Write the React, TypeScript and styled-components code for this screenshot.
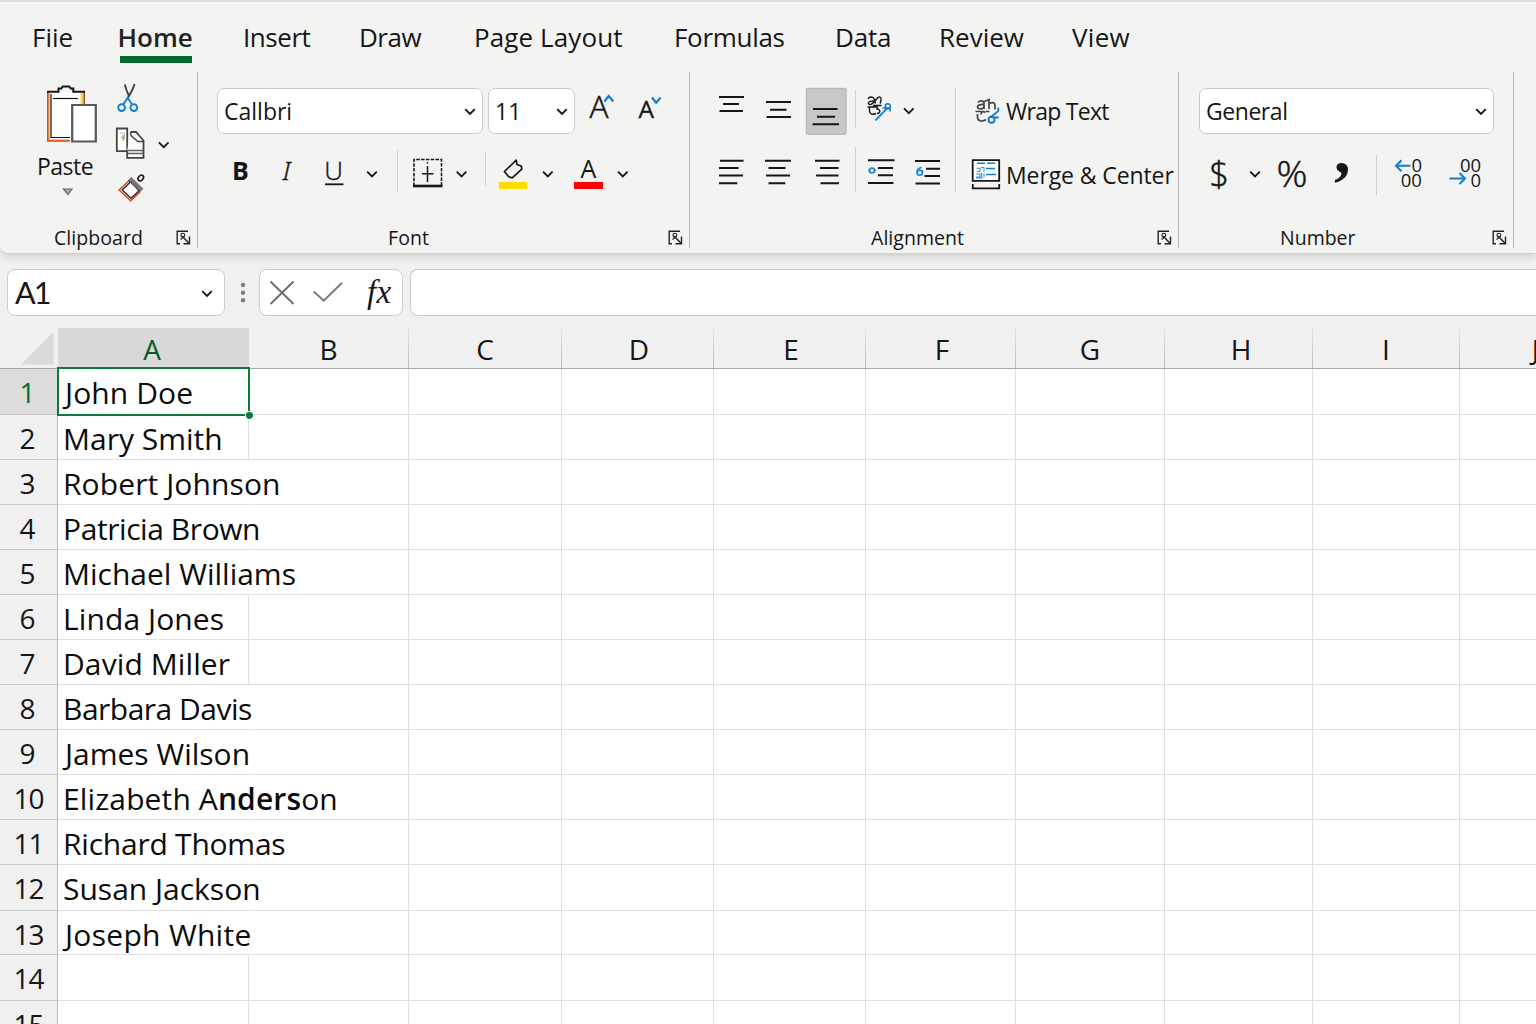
import React from "react";
import styled, { createGlobalStyle, css } from "styled-components";

const INK = "#161616";
const BLUE = "#0f7fd4";
const GREEN = "#0b7a3b";

const GlobalStyle = createGlobalStyle`
  * { box-sizing: border-box; }
  body { margin: 0; overflow: hidden; background: #fff; }
  svg { display: block; flex: none; overflow: visible; }
`;

const Screen = styled.main`
  width: 1536px;
  height: 1024px;
  overflow: hidden;
  display: flex;
  flex-direction: column;
  background: #f0f0f0;
  color: ${INK};
  font-family: "Open Sans", "Noto Sans", sans-serif;
`;

/* ---------- ribbon ---------- */

const Ribbon = styled.header`
  flex: none;
  height: 254px;
  border-top: 2px solid #dededd;
  border-bottom: 1px solid #cfcfcf;
  border-bottom-left-radius: 8px;
  background: #f3f3f2;
  box-shadow: inset 0 1px 0 #fbfbfb, 0 2px 8px rgba(0, 0, 0, 0.16);
  z-index: 1;
`;

const Tabs = styled.nav`
  height: 70px;
  padding: 15px 0 0 32px;
  display: grid;
  grid-template-columns: 88px 123px 116px 115px 200px 161px 104px 133px auto;
  align-items: start;
  justify-items: start;
`;

const Tab = styled.a<{ $ls: number; $active?: boolean }>`
  height: 46px;
  line-height: 41px;
  font-size: 26px;
  letter-spacing: ${(p) => p.$ls}px;
  white-space: nowrap;
  ${(p) =>
    p.$active &&
    css`
      width: 72px;
      text-indent: -2.5px;
      font-weight: 620;
      color: #222;
      border-bottom: 7px solid #03692d;
    `}
`;

const Groups = styled.div`
  display: flex;
  height: 176px;
`;

const Group = styled.section<{ $w: number }>`
  width: ${(p) => p.$w}px;
  border-right: 1px solid #b4b4b4;
  padding-top: 16px;
  display: flex;
  flex-direction: column;
`;

const Caption = styled.footer<{ $left: number; $ls: number }>`
  margin-top: auto;
  height: 22px;
  padding: 0 6px 0 ${(p) => p.$left}px;
  display: flex;
  align-items: center;
  justify-content: space-between;
  font-size: 19.5px;
  line-height: 23px;
  letter-spacing: ${(p) => p.$ls}px;
`;

const Body = styled.div`
  display: flex;
  height: 104px;
`;

const ClipBody = styled(Body)`
  height: 124px;
  margin-top: -6px;
  padding-left: 30px;
`;

const Stack = styled.div<{ $w?: number; $pad?: number }>`
  display: flex;
  flex-direction: column;
  justify-content: space-between;
  width: ${(p) => (p.$w ? `${p.$w}px` : "auto")};
  padding-left: ${(p) => p.$pad ?? 0}px;
`;

const ToolRow = styled.div<{ $h?: number }>`
  display: flex;
  align-items: flex-start;
  height: ${(p) => p.$h ?? 42}px;
`;

const PasteButton = styled.div`
  width: 82px;
  font-size: 23px;
  line-height: 33px;
  letter-spacing: -0.5px;
`;

const PasteLabel = styled.span`
  display: block;
  height: 33px;
  padding-left: 7px;
`;

const Divider = styled.i<{ $h: number; $top?: number }>`
  flex: none;
  width: 1px;
  height: ${(p) => p.$h}px;
  margin-top: ${(p) => p.$top ?? 0}px;
  background: #cfcfcf;
`;

const Select = styled.div<{ $w: number; $mr?: number; $ls?: number }>`
  width: ${(p) => p.$w}px;
  height: 46px;
  margin-right: ${(p) => p.$mr ?? 0}px;
  padding: 0 6px 0 6px;
  display: flex;
  align-items: center;
  justify-content: space-between;
  border: 1px solid #cbcbcb;
  border-radius: 7px;
  background: #fff;
  font-size: 23px;
  letter-spacing: ${(p) => p.$ls ?? 0}px;
`;

const TextButton = styled.div<{ $h: number; $ls: number; $line?: number }>`
  display: flex;
  height: ${(p) => p.$h}px;
  line-height: ${(p) => p.$line ?? p.$h}px;
  font-size: 23px;
  letter-spacing: ${(p) => p.$ls}px;
  white-space: nowrap;
`;

/* ---------- formula bar ---------- */

const FormulaBar = styled.div`
  flex: none;
  height: 74px;
  padding: 15px 0 0 7px;
  display: flex;
`;

const Field = styled.div<{ $w: number }>`
  width: ${(p) => p.$w}px;
  height: 47px;
  display: flex;
  align-items: center;
  justify-content: space-between;
  padding: 0 10px 0 7px;
  border: 1px solid #cccccc;
  border-radius: 8px;
  background: #fff;
`;

const NameText = styled.span`
  font-family: Lato, sans-serif;
  font-size: 30.5px;
  line-height: 44px;
  height: 46px;
  letter-spacing: -1.8px;
`;

const FormulaInput = styled(Field)`
  flex: 1;
  margin-left: 7px;
  border-right: 0;
  border-radius: 8px 0 0 8px;
`;

const FxButtons = styled(Field)`
  padding: 0 10px 0 10px;
`;

const CheckSlot = styled.span`
  margin-right: 5px;
`;

const Fx = styled.span`
  width: 25px;
  font: italic 33px/41px "Liberation Serif", serif;
  letter-spacing: 0.3px;
`;

/* ---------- sheet ---------- */

const columns = "58px 191px 160px 153px 152px 152px 150px 149px 148px 147px 152px";

const HeaderRow = styled.div`
  flex: none;
  display: grid;
  grid-template: 40px / ${columns};
  height: 41px;
  border-bottom: 1px solid #a8a8a8;
`;

const ColHead = styled.div<{ $on?: boolean; $nudge: number }>`
  padding-left: ${(p) => p.$nudge}px;
  font-size: 28px;
  line-height: 42px;
  text-align: center;
  border-right: 1px solid;
  border-image: linear-gradient(#e6e6e6, #b9b9b9) 1;
  ${(p) =>
    p.$on &&
    css`
      background: #d8d8d8;
      color: #075c2a;
      border-image: none;
      border-color: #d8d8d8;
      padding-right: 2px;
    `}
`;

const Row = styled.div<{ $h: number }>`
  flex: none;
  display: grid;
  grid-template: ${(p) => p.$h}px / ${columns};
  height: ${(p) => p.$h}px;
`;

const RowHead = styled.div<{ $on?: boolean; $wide?: boolean }>`
  padding: 2px 2px 0 0;
  border-right: 1px solid #b9b9b9;
  border-bottom: 1px solid #c6c6c6;
  background: ${(p) => (p.$on ? "#dcdcdc" : "#f0f0f0")};
  color: ${(p) => (p.$on ? "#0b6e33" : INK)};
  font-size: 28px;
  line-height: 43px;
  text-align: center;
  ${(p) =>
    p.$wide &&
    css`
      letter-spacing: -1px;
      padding-right: 0;
    `}
`;

const Cell = styled.div<{ $spill?: boolean }>`
  position: relative;
  background: #fff;
  border-right: 1px solid ${(p) => (p.$spill ? "#fff" : "#e0e0e0")};
  border-bottom: 1px solid #e0e0e0;
`;

const CellText = styled.span<{ $ls: number; $x: number }>`
  position: relative;
  z-index: 1;
  display: block;
  padding: 1px 0 0 ${(p) => p.$x}px;
  font-size: 30px;
  line-height: 45px;
  letter-spacing: ${(p) => p.$ls}px;
  color: #0c0c0c;
  white-space: nowrap;
`;

const Strong = styled.b`
  font-weight: 600;
`;

const Selection = styled.i`
  position: absolute;
  inset: -2px -2px -2px -1px;
  border: 2px solid ${GREEN};
  z-index: 2;
  &::after {
    content: "";
    position: absolute;
    right: -5px;
    bottom: -5px;
    width: 7px;
    height: 7px;
    border-radius: 50%;
    background: ${GREEN};
    border: 1px solid #f4f4f4;
    border-width: 1px 0 0 1px;
  }
`;

/* ---------- icons ---------- */

type GlyphProps = { x: number; y: number; w: number; h: number; children: React.ReactNode };

/* Icons share the window's coordinate space, so x and y give the slot's origin. */
const Glyph = ({ x, y, w, h, children }: GlyphProps) => (
  <svg width={w} height={h} viewBox={`${x} ${y} ${w} ${h}`} fill="none" stroke={INK} strokeWidth="1.8">
    {children}
  </svg>
);

const Letter = styled.text<{ $size: number; $weight?: number; $edge?: number }>`
  font-family: "Open Sans", sans-serif;
  font-size: ${(p) => p.$size}px;
  font-weight: ${(p) => p.$weight ?? 400};
  fill: ${INK};
  stroke: ${(p) => (p.$edge ? INK : "none")};
  stroke-width: ${(p) => p.$edge ?? 0}px;
`;

const ItalicLetter = styled(Letter)`
  font-family: "Noto Sans", sans-serif;
  font-style: italic;
`;

const CommaLetter = styled(Letter)`
  font-family: "Liberation Serif", serif;
  font-weight: 700;
`;

const Chevron = ({ w = 12 }: { w?: number }) => (
  <svg width={w} height="8" viewBox="0 0 12 8" fill="none" stroke={INK} strokeWidth="1.9">
    <path d="M1.2 2.200 6 7l4.800-4.800" />
  </svg>
);

const ChevronSlot = ({ x, y, w, h, cx, cy }: { x: number; y: number; w: number; h: number; cx: number; cy: number }) => (
  <Glyph x={x} y={y} w={w} h={h}>
    <path d={`M${cx - 4.8} ${cy - 2.4}l4.8 4.8 4.8-4.8`} />
  </Glyph>
);

const Launcher = () => (
  <svg width="15" height="15" viewBox="0 0 15 15" fill="none" stroke="#222" strokeWidth="1.400">
    <path d="M12 1.200H1.200v12.600H4M13.500 6.500v7.300H7.500" />
    <path d="M6 6l7.300 7.600" />
    <circle cx="6.800" cy="5.200" r="1.900" strokeWidth="1.100" />
    <path d="M4.500 9.500l3-2.500" strokeWidth="1.100" />
  </svg>
);

const Lines = ({ d }: { d: [number, number, number][] }) => (
  <path d={d.map(([a, b, y]) => `M${a} ${y}H${b}`).join("")} strokeWidth="2" />
);

const ClipboardGroup = () => (
  <Group $w={198}>
    <ClipBody>
      <PasteButton>
        <Glyph x={30} y={82} w={70} h={68}>
          <path d="M48.500 92.500H84v49H48.500z" fill="#fff" stroke="none" />
          <path d="M49.300 93v47.300H70" stroke="#f8c24e" strokeWidth="2" />
          <path d="M47.800 91.500v49.600H70" stroke="#d8431f" strokeWidth="1.500" />
          <path d="M82 93v11" stroke="#f5d34a" strokeWidth="3" />
          <path d="M84.200 91.500V104" stroke="#6b2a17" strokeWidth="1.200" />
          <path d="M51 138V94M51 137.500h19" strokeWidth="1.200" />
          <path d="M47 91.800h11.500v-3.300h2.800l1.500-2h6.500l1.500 2h2.500v3.300H85" strokeWidth="2" />
          <path d="M53 98.500h25" strokeWidth="1.200" />
          <path d="M72.200 105h23.600v36.500H72.200z" fill="#fff" stroke="#575757" strokeWidth="2.200" />
        </Glyph>
        <PasteLabel>Paste</PasteLabel>
        <Glyph x={30} y={183} w={70} h={17}>
          <path d="M63.500 189h8.500l-4 5.500z" fill="#aaa" stroke="#666" strokeWidth="1.200" />
        </Glyph>
      </PasteButton>
      <Stack>
        <Glyph x={112} y={82} w={40} h={36}>
          <path d="M124.800 84.500c1 4.500 2.500 8 4.200 11.500M134.500 84c-.8 4-3.500 8-6.500 14" stroke="#444" strokeWidth="1.900" />
          <path d="M128.500 96.500l-5.300 8M128 98.500l4 5.500" stroke={BLUE} strokeWidth="1.900" />
          <circle cx="121.600" cy="107.600" r="3.400" stroke={BLUE} strokeWidth="1.900" />
          <circle cx="133.800" cy="107.600" r="3.400" stroke={BLUE} strokeWidth="1.900" />
        </Glyph>
        <ToolRow $h={46}>
          <Glyph x={112} y={118} w={40} h={46}>
            <path d="M116.800 128.500h10.400v22.700h-10.400z" fill="#fff" stroke="#444" />
            <path d="M120 133h4.500v6" stroke="#aebdcb" strokeWidth="1" />
            <path d="M123.200 135v6M121 137.500h4" stroke="#e2a23a" strokeWidth="1.400" />
            <path d="M130.500 132h5.500l7.500 8.500v17.300h-16.300v-7.600" fill="#fafafa" stroke="#444" />
            <path d="M130.200 132.500l1.300 3.500 6.500 5.500h5.500" stroke="#444" strokeWidth="1.400" />
            <path d="M128 150.500h15M128 153.500h15" stroke="#666" strokeWidth="1.300" />
          </Glyph>
          <ChevronSlot x={152} y={118} w={24} h={46} cx={163.7} cy={144.8} />
        </ToolRow>
        <Glyph x={112} y={164} w={40} h={42}>
          <path d="M131 179l-11.800 11 11.500 10.800 9-8.500z" fill="#fff" stroke="#d8431f" strokeWidth="1.500" />
          <path d="M131.500 181l-9.300 9 8.800 8.300 7.500-7" stroke="#222" strokeWidth="1.300" />
          <path d="M129.800 178.500l12 11.800" stroke="#777" strokeWidth="4.500" />
          <path d="M128.500 180.500l11.500 11" stroke="#333" strokeWidth="1" />
          <ellipse cx="140.800" cy="178" rx="3.200" ry="2.300" transform="rotate(-50 140.800 178)" strokeWidth="1.600" />
        </Glyph>
      </Stack>
    </ClipBody>
    <Caption $left={54} $ls={0.05}>
      Clipboard <Launcher />
    </Caption>
  </Group>
);

const FontGroup = () => (
  <Group $w={492}>
    <Body>
      <Stack $pad={19}>
        <ToolRow $h={47}>
          <Select $w={266} $mr={5} $ls={0}>
            Callbri <Chevron />
          </Select>
          <Select $w={87}>
            11 <Chevron />
          </Select>
          <Glyph x={575} y={88} w={53} h={47}>
            <Letter x="589.500" y="118" $size={31.5} $weight={300} $edge={0.5}>A</Letter>
            <path d="M604.500 101.500l4.200-5.500 4.600 5.500" stroke={BLUE} strokeWidth="2.200" />
          </Glyph>
          <Glyph x={628} y={88} w={40} h={47}>
            <Letter x="638.500" y="118.300" $size={24.5} $edge={0.3}>A</Letter>
            <path d="M652 97.500l4.200 5.200 4.300-5.200" stroke={BLUE} strokeWidth="2.200" />
          </Glyph>
        </ToolRow>
        <ToolRow>
          <Glyph x={217} y={150} w={47} h={42}>
            <Letter x="232" y="180" $size={25} $weight={660}>B</Letter>
          </Glyph>
          <Glyph x={264} y={150} w={47} h={42}>
            <ItalicLetter x="282.500" y="180" $size={26.5} $weight={300} $edge={0.3}>I</ItalicLetter>
          </Glyph>
          <Glyph x={311} y={150} w={46} h={42}>
            <Letter x="324.200" y="179.500" $size={26} $weight={300} $edge={0.4}>U</Letter>
            <path d="M325 184.300h18.500" />
          </Glyph>
          <ChevronSlot x={357} y={150} w={40} h={42} cx={372} cy={174} />
          <Divider $h={42} />
          <Glyph x={398} y={150} w={49} h={42}>
            <path d="M414 186v-26.500h27.500V186" strokeDasharray="3.500 1.300" strokeWidth="1.500" />
            <path d="M413 186h29.500" strokeWidth="2.600" />
            <path d="M427.500 166v16M422 173.800h11.500M427 163.500l.8-1.500" strokeWidth="1.500" />
          </Glyph>
          <ChevronSlot x={447} y={150} w={38} h={42} cx={461.5} cy={174} />
          <Divider $h={34} $top={2} />
          <Glyph x={486} y={150} w={52} h={42}>
            <path d="M504.400 171.500l7.300-7 4.500-4.300.8 4.300 4.300 1.500.5 3.200-9.600 8.700-3.500-1.200z" strokeWidth="1.700" strokeLinejoin="round" />
            <path d="M499 185.500h28.300" stroke="#ffdc00" strokeWidth="7" />
          </Glyph>
          <ChevronSlot x={538} y={150} w={22} h={42} cx={547.8} cy={174} />
          <Glyph x={560} y={150} w={53} h={42}>
            <Letter x="580.500" y="178" $size={25}>A</Letter>
            <path d="M574 185.500h29" stroke="#fb0207" strokeWidth="7" />
          </Glyph>
          <ChevronSlot x={613} y={150} w={20} h={42} cx={622.8} cy={174} />
        </ToolRow>
      </Stack>
    </Body>
    <Caption $left={190} $ls={0.1}>
      Font <Launcher />
    </Caption>
  </Group>
);

const AlignmentGroup = () => (
  <Group $w={489}>
    <Body>
      <Stack $w={265}>
        <ToolRow $h={47}>
          <Glyph x={690} y={88} w={65} h={47}>
            <Lines d={[[719, 744, 97], [723, 739, 104], [719.5, 743, 111]]} />
          </Glyph>
          <Glyph x={755} y={88} w={45} h={47}>
            <Lines d={[[766, 791, 102], [770, 786.5, 109.7], [766.5, 791, 117]]} />
          </Glyph>
          <Glyph x={800} y={88} w={55} h={47}>
            <rect x="806.300" y="88.300" width="39.800" height="46" rx="1" fill="#c7c7c7" stroke="#b2b2b2" strokeWidth="1" />
            <Lines d={[[813, 837.5, 109], [817, 835, 116.7], [812.5, 839, 124.3]]} />
          </Glyph>
          <Divider $h={38} $top={2} />
          <Glyph x={856} y={88} w={40} h={47}>
            <path d="M868 99c1.500-3 5.500-2.500 6.500.5l1 4M874 101c-5.500-.5-7.500 3-4 3.500 3 0 6-5 8-7 1.500-1 3.500-.5 3 2.500l-.8 3.500" strokeWidth="1.400" />
            <path d="M867.500 107h9M869.500 107v4c0 3.500 3 4 6.500 2.500M873 105.500h8.500M877.500 106.500l-.5 2.500c4 0 3.500 4.500 0 4.500" strokeWidth="1.400" />
            <path d="M875.500 120.300l12-12.500" stroke={BLUE} strokeWidth="1.900" />
            <path d="M882.500 108h7.500v3.500" stroke={BLUE} strokeWidth="1.600" />
            <circle cx="887.800" cy="106.300" r="2.500" stroke={BLUE} strokeWidth="1.600" />
          </Glyph>
          <ChevronSlot x={896} y={88} w={24} h={47} cx={908.8} cy={110.8} />
        </ToolRow>
        <ToolRow $h={45}>
          <Glyph x={690} y={147} w={65} h={45}>
            <Lines d={[[720, 743.5, 160.7], [719, 738.5, 168], [719, 743, 175.6], [719, 737.3, 183.2]]} />
          </Glyph>
          <Glyph x={755} y={147} w={45} h={45}>
            <Lines d={[[765, 791, 160.7], [768.5, 785.5, 168], [766, 790, 175.6], [768.5, 785.3, 183.2]]} />
          </Glyph>
          <Glyph x={800} y={147} w={55} h={45}>
            <Lines d={[[815, 839.5, 160.7], [820, 838.5, 168], [816, 838.5, 175.6], [820.5, 839, 183.2]]} />
          </Glyph>
          <Divider $h={45} />
          <Glyph x={856} y={147} w={50} h={45}>
            <Lines d={[[868, 894.5, 160.2], [878, 893, 168], [878, 893, 175.2], [868, 893.5, 183]]} />
            <circle cx="872" cy="170.500" r="2.500" stroke={BLUE} strokeWidth="1.600" />
            <path d="M868.300 170.500h1M874.700 170.500h1.200" stroke={BLUE} strokeWidth="1.600" />
          </Glyph>
          <Glyph x={906} y={147} w={44} h={45}>
            <Lines d={[[915, 940, 161], [926, 940, 168.8], [924.5, 940, 176], [915.5, 940, 183.5]]} />
            <ellipse cx="919.800" cy="172.800" rx="2.700" ry="2.500" stroke={BLUE} strokeWidth="1.600" />
            <path d="M917 172.500c0-2.500 2-4.500 4.500-5M922.300 172v-2" stroke={BLUE} strokeWidth="1.600" />
          </Glyph>
        </ToolRow>
      </Stack>
      <Divider $h={104} />
      <Stack>
        <TextButton $h={46} $ls={-0.72}>
          <Glyph x={956} y={88} w={50} h={46}>
            <path d="M978 102.500c2-2.500 6-2 6 1v5.500M984 104.500c-8-.5-8 4.500-3.500 4.500 2 0 3.500-1.500 3.500-3M984.500 101.500l4.500-2v9.500M989 104c3-2.500 6-1.500 6 1.500v4" stroke="#444" strokeWidth="1.700" />
            <path d="M975.500 111.500h6M977.500 114v3c0 4.500 5 5 8.500 2.500M985.500 112.500c-2-2-4.500-.5-4.500 2M986 111.500h3.500" stroke="#444" strokeWidth="1.700" />
            <path d="M998.300 107.500v2.500c0 3-7 5-8 8M993.500 117.500h5.200" stroke={BLUE} strokeWidth="1.900" />
            <circle cx="991.500" cy="119.700" r="3" stroke={BLUE} strokeWidth="1.900" />
          </Glyph>
          Wrap Text
        </TextButton>
        <TextButton $h={35} $line={37} $ls={-0.1}>
          <Glyph x={956} y={157} w={50} h={35}>
            <path d="M972.700 160.200h26.500v20.600h-26.500z" fill="#fff" />
            <path d="M972.800 184v4.300h26.400V184" />
            <path d="M977 163.300h8M987 163.300h8M986 168.500h9M986 174.500h10" stroke={BLUE} strokeWidth="1.500" />
            <path d="M976.500 168.300h3.500v3.200h-3.500M981 167.500h3v4M976 174h4v3h-4M981.500 173v4.500M984 173v4.500M976 178h7" stroke="#3e97d8" strokeWidth="1.100" />
          </Glyph>
          Merge &amp; Center
        </TextButton>
      </Stack>
    </Body>
    <Caption $left={181} $ls={0.05}>
      Alignment <Launcher />
    </Caption>
  </Group>
);

const NumberGroup = () => (
  <Group $w={335}>
    <Body>
      <Stack $pad={20}>
        <Select $w={295} $ls={-0.45}>
          General <Chevron />
        </Select>
        <ToolRow>
          <Glyph x={1199} y={150} w={41} h={42}>
            <Letter x="1209.500" y="186.500" $size={34} $weight={300} $edge={0.6}>$</Letter>
          </Glyph>
          <ChevronSlot x={1240} y={150} w={28} h={42} cx={1255} cy={174} />
          <Glyph x={1268} y={150} w={52} h={42}>
            <Letter x="1276.500" y="187" $size={36} $weight={300} $edge={0.5} textLength="31" lengthAdjust="spacingAndGlyphs">%</Letter>
          </Glyph>
          <Glyph x={1320} y={150} w={56} h={42}>
            <CommaLetter x="1334" y="173" $size={66}>,</CommaLetter>
          </Glyph>
          <Divider $h={40} $top={5} />
          <Glyph x={1377} y={150} w={58} h={42}>
            <path d="M1396 165.800h14.500M1401.500 160.300l-5.500 5.500 5.500 5.500" stroke={BLUE} strokeWidth="2.100" />
            <Letter x="1411.500" y="171.500" $size={18.5}>0</Letter>
            <Letter x="1400.700" y="186.500" $size={18.5}>00</Letter>
          </Glyph>
          <Glyph x={1435} y={150} w={58} h={42}>
            <path d="M1449.500 178.500h15.500M1459.500 173l5.500 5.500-5.500 5.500" stroke={BLUE} strokeWidth="2.100" />
            <Letter x="1460" y="171.500" $size={18.5}>00</Letter>
            <Letter x="1470.500" y="186.500" $size={18.5}>0</Letter>
          </Glyph>
        </ToolRow>
      </Stack>
    </Body>
    <Caption $left={101} $ls={0}>
      Number <Launcher />
    </Caption>
  </Group>
);

const tabs: [string, number][] = [
  ["Fiie", 0],
  ["Home", 0],
  ["Insert", -0.45],
  ["Draw", -0.5],
  ["Page Layout", 0.1],
  ["Formulas", -0.3],
  ["Data", -0.2],
  ["Review", 0],
  ["View", 0.3],
];

type Entry = { name?: React.ReactNode; ls?: number; h: number; spill?: boolean; x?: number };

const rows: Entry[] = [
  { name: "John Doe", ls: 0.1, h: 46, spill: true, x: 7 },
  { name: "Mary Smith", ls: 0, h: 45 },
  { name: "Robert Johnson", ls: 0.1, h: 45, spill: true },
  { name: "Patricia Brown", ls: -0.42, h: 45, spill: true },
  { name: "Michael Williams", ls: 0, h: 45, spill: true },
  { name: "Linda Jones", ls: 0.1, h: 45 },
  { name: "David Miller", ls: 0.1, h: 45 },
  { name: "Barbara Davis", ls: -0.5, h: 45, spill: true },
  { name: "James Wilson", ls: 0, h: 45, spill: true, x: 7 },
  { name: <>Elizabeth A<Strong>nders</Strong>on</>, ls: 0.12, h: 45, spill: true },
  { name: "Richard Thomas", ls: -0.23, h: 45, spill: true },
  { name: "Susan Jackson", ls: 0, h: 46, spill: true },
  { name: "Joseph White", ls: 0.3, h: 44, spill: true, x: 7 },
  { h: 46 },
  { h: 46 },
];

const letters = "ABCDEFGHIJ".split("");
const nudges = [0, 0, 0, 3, 3, 3, 0, 5, 0, 0];

export default function App() {
  return (
    <Screen>
      <GlobalStyle />
      <Ribbon>
        <Tabs>
          {tabs.map(([label, ls]) => (
            <Tab key={label} $ls={ls} $active={label === "Home"}>
              {label}
            </Tab>
          ))}
        </Tabs>
        <Groups>
          <ClipboardGroup />
          <FontGroup />
          <AlignmentGroup />
          <NumberGroup />
        </Groups>
      </Ribbon>

      <FormulaBar>
        <Field $w={218}>
          <NameText>A1</NameText>
          <Chevron w={14} />
        </Field>
        <svg width="34" height="47" viewBox="225 269 34 47" fill="#7d7d7d">
          <circle cx="243" cy="285" r="2.200" />
          <circle cx="243" cy="292.700" r="2.200" />
          <circle cx="243" cy="300.200" r="2.200" />
        </svg>
        <FxButtons $w={144}>
          <svg width="24" height="24" viewBox="0 0 24 24" fill="none" stroke="#6a6a6a" strokeWidth="1.800">
            <path d="M.5.500l23 22.500M23.500.500L.5 23" />
          </svg>
          <CheckSlot>
            <svg width="30" height="20" viewBox="0 0 30 20" fill="none" stroke="#7a7a7a" strokeWidth="1.900">
              <path d="M.8 8.500l10 9.300L29-.2" />
            </svg>
          </CheckSlot>
          <Fx>fx</Fx>
        </FxButtons>
        <FormulaInput $w={1125} />
      </FormulaBar>

      <HeaderRow>
        <svg width="58" height="40" viewBox="0 0 58 40">
          <path d="M21 36.500L53.500 4v32.500z" fill="#dadada" />
        </svg>
        {letters.map((l, i) => (
          <ColHead key={l} $on={l === "A"} $nudge={nudges[i]}>
            {l}
          </ColHead>
        ))}
      </HeaderRow>
      {rows.map((r, i) => (
        <Row key={i} $h={r.h}>
          <RowHead $on={i === 0} $wide={i > 8}>
            {i + 1}
          </RowHead>
          {letters.map((l, c) => (
            <Cell key={l} $spill={c === 0 && r.spill}>
              {c === 0 && r.name && (
                <CellText $ls={r.ls ?? 0} $x={r.x ?? 5}>
                  {r.name}
                </CellText>
              )}
              {c === 0 && i === 0 && <Selection />}
            </Cell>
          ))}
        </Row>
      ))}
    </Screen>
  );
}
